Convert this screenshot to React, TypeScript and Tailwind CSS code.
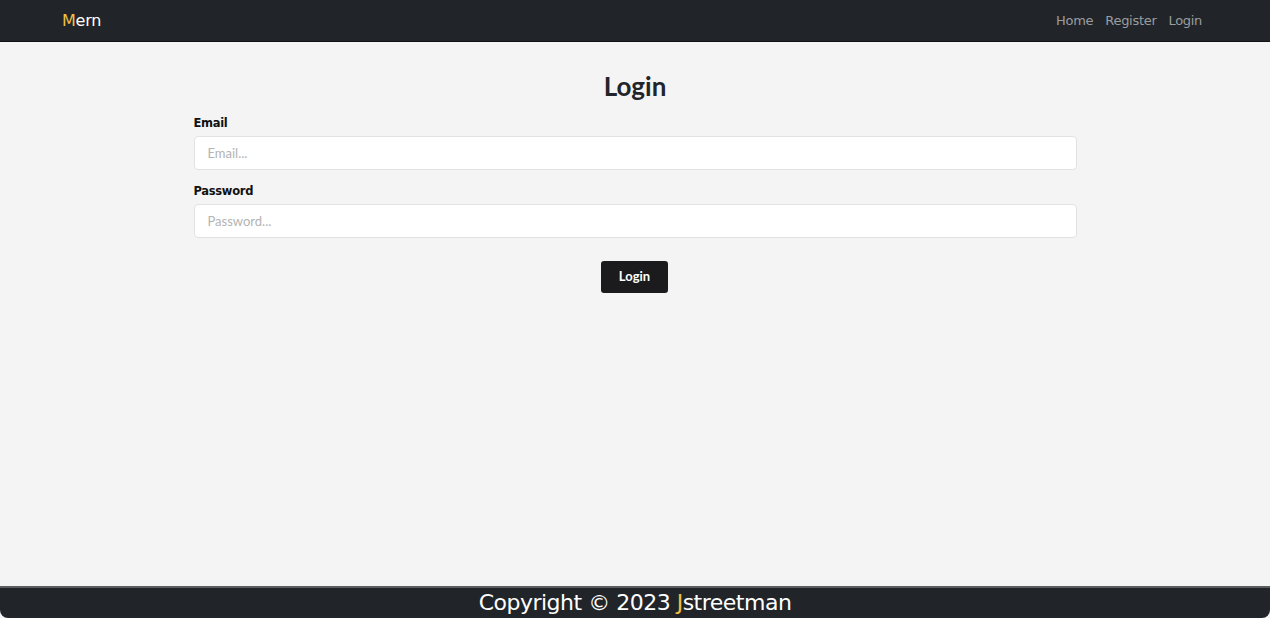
import React from "react";

export default function App() {
  const poppins = { fontFamily: '"DejaVu Sans", "Open Sans", sans-serif' };
  return (
    <div className="h-[618px] w-[1270px] flex flex-col bg-[#f4f4f4] overflow-hidden">
      <nav className="h-[42px] shrink-0 bg-[#212529] border-b border-[#111] flex items-center justify-between pl-[62px] pr-[68px]" style={poppins}>
        <div className="text-[16px] text-white tracking-[-0.2px]">
          <span className="text-[#f0c043]">M</span>ern
        </div>
        <div className="flex gap-[12px] text-[13px] text-[#9a9da0] tracking-[-0.3px]">
          <span>Home</span>
          <span>Register</span>
          <span>Login</span>
        </div>
      </nav>
      <main className="flex-1 flex flex-col items-center" style={{ fontFamily: 'Lato, sans-serif' }}>
        <h1 className="mt-[27px] text-[26px] leading-[34px] font-bold text-[#212529]">Login</h1>
        <form className="w-[883px] mt-[12px] flex flex-col" onSubmit={(e) => e.preventDefault()}>
          <label className="text-[11.5px] font-bold text-[#111] leading-[16px] tracking-[-0.3px]" style={poppins}>Email</label>
          <input
            className="mt-[5px] h-[34px] w-full bg-white border border-[#e2e2e2] rounded-[4px] px-[13px] text-[13px] placeholder:text-[#b3b3b3] outline-none"
            placeholder="Email..."
          />
          <label className="mt-[13px] text-[11.5px] font-bold text-[#111] leading-[16px] tracking-[-0.3px]" style={poppins}>Password</label>
          <input
            type="password"
            className="mt-[5px] h-[34px] w-full bg-white border border-[#e2e2e2] rounded-[4px] px-[13px] text-[13px] placeholder:text-[#b3b3b3] outline-none"
            placeholder="Password..."
          />
          <div className="flex justify-center mt-[23px]">
            <button className="w-[67px] h-[32px] bg-[#1b1b1d] text-white text-[13px] font-bold rounded-[3px] ml-[-1px]">Login</button>
          </div>
        </form>
      </main>
      <footer className="h-[32px] shrink-0 bg-[#212529] border-t-2 border-[#5a5c5f] rounded-b-[8px] flex items-center justify-center" style={poppins}>
        <span className="text-[22px] text-white leading-[30px] tracking-[-0.5px]">
          Copyright © 2023 <span className="text-[#f0c043]">J</span>streetman
        </span>
      </footer>
    </div>
  );
}
